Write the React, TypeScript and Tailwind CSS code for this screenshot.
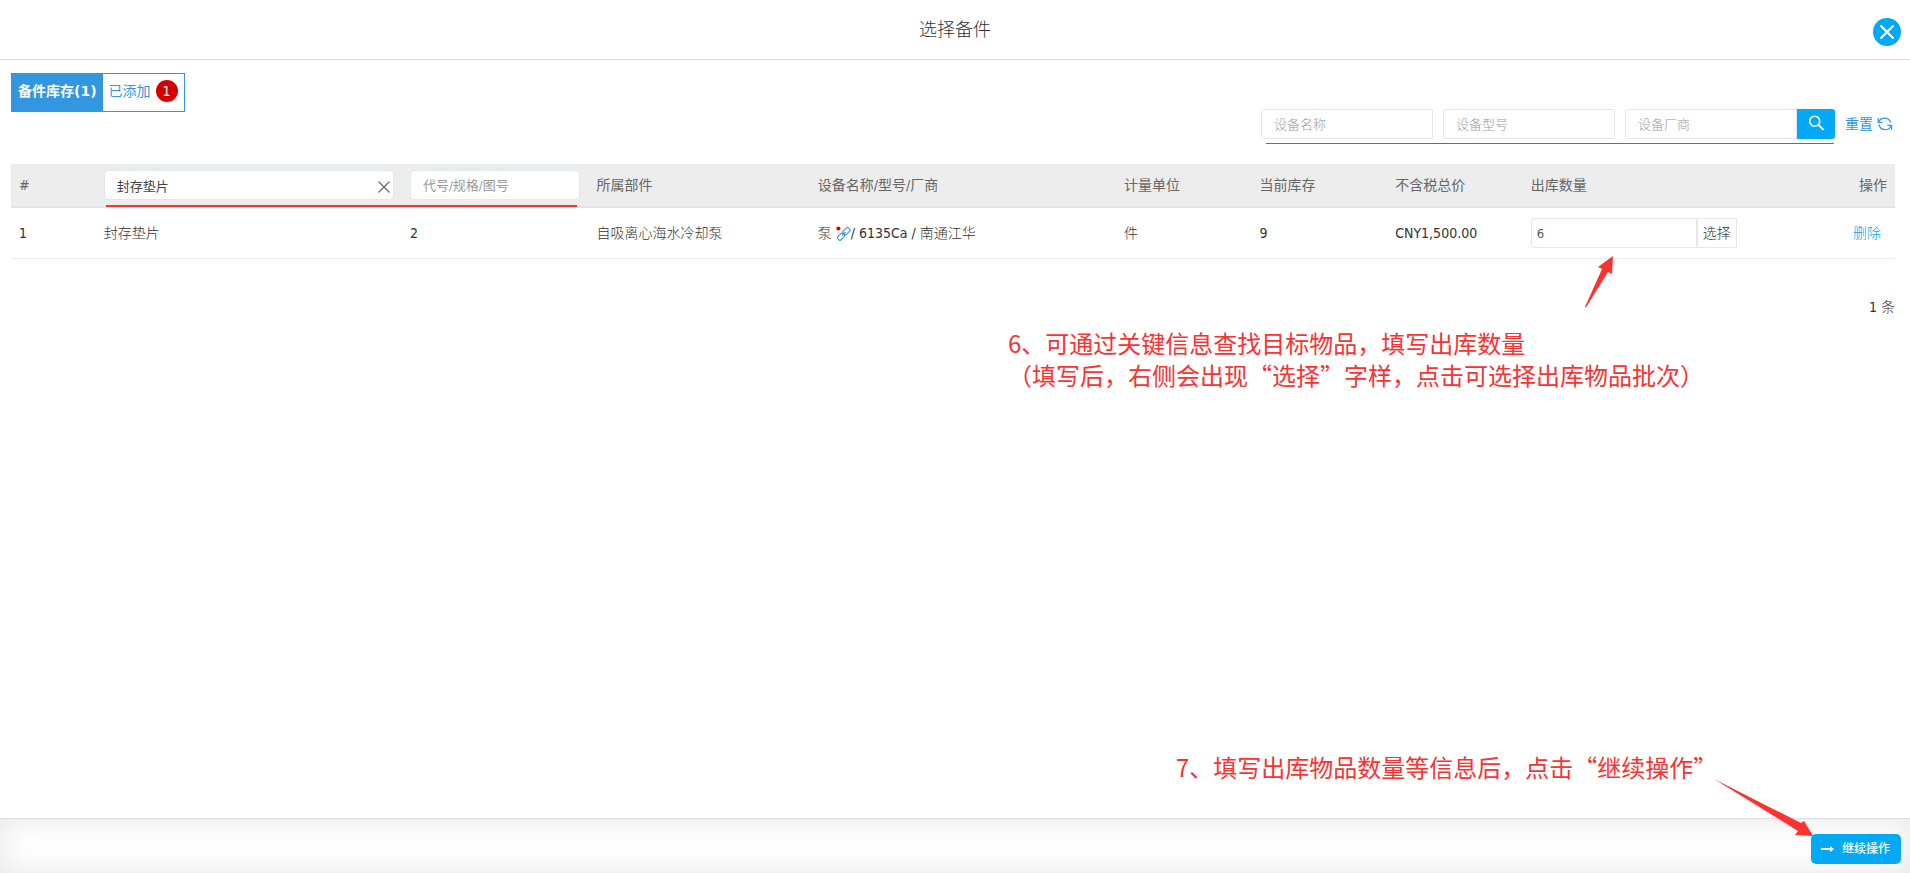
import { useState } from 'react';

const filters = ['设备名称', '设备型号', '设备厂商'];

function SearchIcon() {
  return (
    <svg viewBox="0 0 16 16" className="h-4 w-4" fill="none" stroke="currentColor" strokeWidth="1.6" strokeLinecap="round" aria-hidden="true">
      <circle cx="6.7" cy="6.2" r="5" />
      <path d="M10.3 9.8 15 14.4" strokeWidth="1.9" />
    </svg>
  );
}

function RefreshIcon() {
  return (
    <svg viewBox="0 0 16 14" className="h-[14px] w-4" fill="none" stroke="currentColor" strokeWidth="1.2" aria-hidden="true">
      <path d="M1.2 1v4.3h4.3" />
      <path d="M1.4 5C4 .2 11.500-.8 13.800 5.500" />
      <path d="M2 7.500C3.500 14 11.500 14.500 14.400 8.700" />
      <path d="M10.300 8.400h4.300v4.300" />
    </svg>
  );
}

function LinkIcon() {
  return (
    <svg viewBox="0 0 15 15" className="h-[15px] w-[15px]" fill="none" stroke="#3296e1" strokeWidth="1.1" aria-hidden="true">
      <rect x="-3.800" y="-2.300" width="7.600" height="4.600" rx="1.900" transform="translate(10.500 5.200) rotate(-45)" />
      <rect x="-3.800" y="-2.300" width="7.600" height="4.600" rx="1.900" transform="translate(5 10.700) rotate(-45)" />
      <path d="m6 9.700 3.600-3.600" />
      <circle cx="2.400" cy="2.400" r="2" fill="#d60000" stroke="none" />
    </svg>
  );
}

export default function App() {
  const [name, setName] = useState('封存垫片');
  const [quantity, setQuantity] = useState('6');

  return (
    <div lang="zh-CN" className="relative flex min-h-screen flex-col bg-white font-['DejaVu_Sans_Condensed','Noto_Sans','Noto_Sans_CJK_SC',sans-serif] text-sm text-[#333]">
      <header className="relative flex h-[60px] items-center justify-center border-b border-[#e0e0e0]">
        <h1 className="text-lg leading-6 font-light">选择备件</h1>
        <button type="button" aria-label="关闭" className="absolute top-[18px] right-[9px] flex h-7 w-7 items-center justify-center rounded-full bg-[#03a9f4] text-white">
          <svg viewBox="0 0 14 14" className="h-[14px] w-[14px]" stroke="currentColor" strokeWidth="2.2" strokeLinecap="round" aria-hidden="true">
            <path d="m1 1 12 12M13 1 1 13" />
          </svg>
        </button>
      </header>

      <main className="flex-1 pt-[13px] pr-[15px] pl-[11px]">
        <div className="flex h-9">
          <div className="flex h-[39px] shrink-0 border border-[#3296e1]">
            <button type="button" className="bg-[#3296e1] px-[6px] pb-1 font-['DejaVu_Sans','Noto_Sans_CJK_SC',sans-serif] font-bold text-white">备件库存(1)</button>
            <button type="button" className="flex items-center gap-[5px] px-[6px] pb-1 text-[#3296e1]">
              已添加
              <span className="flex h-[22px] w-[22px] items-center justify-center rounded-full bg-[#d60000] text-white">1</span>
            </button>
          </div>
        </div>

        <form className="flex justify-end pr-[2px]" onSubmit={(e) => e.preventDefault()}>
          <div className="relative flex gap-[10px]">
            {filters.map((label, i) => (
              <div key={label} className="flex">
                <input aria-label={label} placeholder={label} className="h-[30px] w-[172px] rounded-l-[3px] border border-[#e6e6e6] px-3 text-[13px] outline-none placeholder:font-light placeholder:text-[#999]" />
                {i === 2 && (
                  <button type="submit" aria-label="搜索" className="flex h-[30px] w-[38px] items-center justify-center rounded-r-[3px] bg-[#03a9f4] pb-[2px] text-white">
                    <SearchIcon />
                  </button>
                )}
              </div>
            ))}
            <span className="absolute -bottom-[5px] left-[5px] h-px w-[calc(100%-6px)] bg-[#fa3232]" />
          </div>
          <button type="reset" className="ml-[10px] flex items-center gap-1 text-[#3296e1]">
            <span>重置</span>
            <RefreshIcon />
          </button>
        </form>

        <table className="mt-[25px] w-full table-fixed border-separate border-spacing-0 text-left">
          <colgroup>
            <col className="w-[4.5%]" />
            <col className="w-[16.25%]" />
            <col className="w-[9.9%]" />
            <col className="w-[11.75%]" />
            <col className="w-[16.25%]" />
            <col className="w-[7.2%]" />
            <col className="w-[7.2%]" />
            <col className="w-[7.2%]" />
            <col />
            <col className="w-[6%]" />
          </colgroup>
          <thead>
            <tr className="h-11 bg-[#ededed] text-[#666] [&>th]:border-b-2 [&>th]:border-[#e1e6eb] [&>th]:px-2 [&>th]:font-normal">
              <th>#</th>
              <th>
                <div className="relative flex">
                  <input aria-label="备件名称" value={name} onChange={(e) => setName(e.target.value)} className="h-[30px] w-full rounded border border-[#e1e6eb] bg-white pr-8 pl-3 text-[13px] text-[#444] outline-none" />
                  <button type="button" aria-label="清除" onClick={() => setName('')} className="absolute top-[11px] right-1 text-[#666]">
                    <svg viewBox="0 0 12 12" className="h-3 w-3" stroke="currentColor" strokeWidth="1.2" aria-hidden="true">
                      <path d="m.5.5 11 11M11.500.5l-11 11" />
                    </svg>
                  </button>
                  <span className="absolute top-[35px] left-[2px] z-10 h-[2px] w-[471px] bg-[#fa3232]" />
                </div>
              </th>
              <th>
                <input aria-label="代号/规格/图号" placeholder="代号/规格/图号" className="block h-[30px] w-full rounded border border-[#e1e6eb] bg-white px-3 text-[13px] outline-none placeholder:text-[#999]" />
              </th>
              <th>所属部件</th>
              <th>设备名称/型号/厂商</th>
              <th>计量单位</th>
              <th>当前库存</th>
              <th>不含税总价</th>
              <th>出库数量</th>
              <th className="text-right">操作</th>
            </tr>
          </thead>
          <tbody>
            <tr className="h-[51px] [&>td]:border-b [&>td]:border-[#ededed] [&>td]:px-2">
              <td>1</td>
              <td className="font-light">封存垫片</td>
              <td>2</td>
              <td className="font-light">自吸离心海水冷却泵</td>
              <td>
                <div className="flex items-center">
                  <span className="mr-1 font-light">泵</span>
                  <LinkIcon />
                  <span className="whitespace-pre">/ 6135Ca / </span>
                  <span className="font-light">南通江华</span>
                </div>
              </td>
              <td className="font-light">件</td>
              <td>9</td>
              <td>CNY1,500.00</td>
              <td>
                <div className="flex">
                  <input aria-label="出库数量" value={quantity} onChange={(e) => setQuantity(e.target.value)} className="h-[30px] w-[166px] rounded-l-[3px] border border-[#e6e6e6] px-[5px] text-[13px] text-[#555] outline-none" />
                  <button type="button" className="h-[30px] w-10 border border-[#e6e6e6] font-light text-[#333]">选择</button>
                </div>
              </td>
              <td className="text-right"><a href="#delete" className="pr-[6px] font-light text-[#03a9f4]">删除</a></td>
            </tr>
          </tbody>
        </table>
        <p className="mt-[38px] text-right leading-5">1 <span className="font-light">条</span></p>
      </main>

      <footer className="flex h-[55px] items-center justify-end border-t border-[#e0e0e0] pt-[6px] pr-[9px] shadow-[inset_0_0_30px_rgba(0,0,0,0.1)]">
        <button type="button" className="flex h-[30px] w-[90px] items-center gap-2 rounded-[5px] bg-[#03a9f4] pl-[10px] text-xs font-medium text-white">
          <svg viewBox="0 0 13 8" className="h-2 w-[13px]" fill="currentColor" aria-hidden="true">
            <path d="M0 3h9V1l4 3-4 3V5H0z" />
          </svg>
          继续操作
        </button>
      </footer>

      <div className="pointer-events-none absolute inset-0 font-['Noto_Sans_CJK_SC','Noto_Sans',sans-serif] text-2xl leading-8 whitespace-pre text-[#fa3232]">
        <p className="absolute top-[327px] left-[1008px]">6、可通过关键信息查找目标物品，填写出库数量{'\n'}（填写后，右侧会出现“选择”字样，点击可选择出库物品批次）</p>
        <p className="absolute top-[751px] left-[1176px]">7、填写出库物品数量等信息后，点击“继续操作”</p>
        <svg viewBox="0 0 30 54" className="absolute top-[255px] left-[1584px] h-[54px] w-[30px]" fill="currentColor" aria-hidden="true">
          <path d="M29 1 28 19 24 17 2 52.500 1 52 18 14 14 12z" />
        </svg>
        <svg viewBox="0 0 100 60" className="absolute top-[778px] left-[1713px] h-[60px] w-[100px]" fill="currentColor" aria-hidden="true">
          <path d="M1 1 88 45 91 43 100 58 82 57 85 53z" />
        </svg>
      </div>
    </div>
  );
}
